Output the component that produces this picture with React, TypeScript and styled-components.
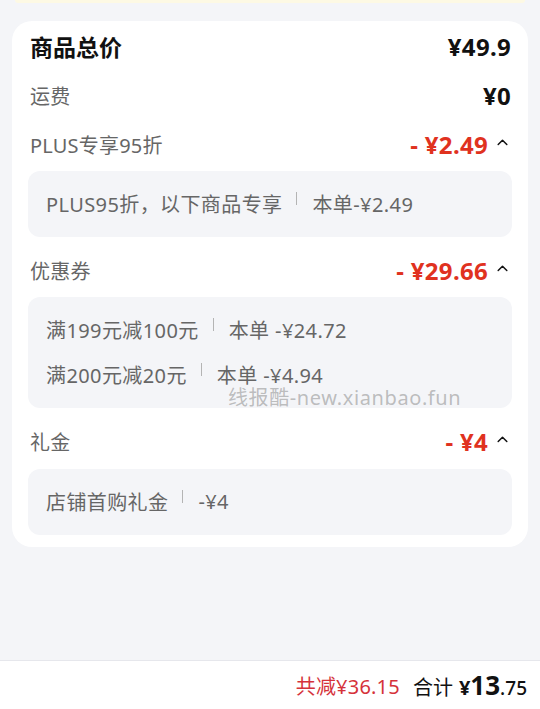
import React from "react";
import styled, { createGlobalStyle } from "styled-components";

const Global = createGlobalStyle`
  html, body { margin: 0; padding: 0; background: #f4f5f8; }
  body { font-family: "Noto Sans", "Noto Sans CJK SC", sans-serif; -webkit-font-smoothing: antialiased; }
  * { box-sizing: border-box; }
`;

const Page = styled.div`
  width: 540px;
  height: 709px;
  display: flex;
  flex-direction: column;
  background: #f4f5f8;
  position: relative;
  overflow: hidden;
`;

const TopStrip = styled.div`
  height: 3px;
  margin: 0 15px;
  background: #fdf9e4;
  border-radius: 0 0 10px 10px;
`;

const Card = styled.div`
  margin: 18px 12px 0 12px;
  background: #fff;
  border-radius: 20px;
  padding: 0 16px 12px 16px;
  display: flex;
  flex-direction: column;
  position: relative;
`;

const Row = styled.div<{ $h: number; $mt?: number }>`
  height: ${(p) => p.$h}px;
  margin-top: ${(p) => p.$mt ?? 0}px;
  padding: 0 1px 0 2px;
  display: flex;
  align-items: center;
  justify-content: space-between;
`;

const Label = styled.span<{ $strong?: boolean }>`
  font-size: ${(p) => (p.$strong ? 23 : 20)}px;
  font-weight: ${(p) => (p.$strong ? 700 : 400)};
  color: ${(p) => (p.$strong ? "#111" : "#666")};
  letter-spacing: ${(p) => (p.$strong ? 0 : 0.2)}px;
`;

const Amount = styled.span`
  font-size: 24px;
  font-weight: 700;
  color: #111;
  letter-spacing: 0.3px;
`;

const RedAmount = styled.span`
  display: flex;
  align-items: center;
  gap: 9px;
  margin-right: 3px;
  font-size: 24px;
  font-weight: 700;
  color: #e0321f;
  letter-spacing: 0.3px;
`;

const Caret = styled.svg`
  width: 11px;
  height: 8px;
  margin-top: -5px;
`;

const DetailBox = styled.div<{ $mt: number }>`
  margin-top: ${(p) => p.$mt}px;
  background: #f4f5f8;
  border-radius: 12px;
  padding: 10px 18px 11px 18px;
  display: flex;
  flex-direction: column;
`;

const DetailLine = styled.div`
  height: 45px;
  display: flex;
  align-items: center;
  font-size: 20px;
  letter-spacing: 0.4px;
  color: #666;
  white-space: pre;
`;

const Sep = styled.span`
  display: inline-block;
  width: 1px;
  height: 13px;
  background: #b4b4b4;
  margin: -10px 15px 0 14px;
`;

const Watermark = styled.div`
  position: absolute;
  left: 216px;
  top: 361px;
  font-size: 20px;
  color: rgba(140, 140, 140, 0.55);
  letter-spacing: 0.6px;
`;

const Spacer = styled.div`
  flex: 1;
`;

const BottomBar = styled.div`
  height: 49px;
  background: #fff;
  border-top: 1px solid #e6e7ec;
  display: flex;
  align-items: center;
  justify-content: flex-end;
  padding-right: 13px;
  gap: 13px;
`;

const Saved = styled.span`
  font-size: 20px;
  letter-spacing: 0.2px;
  color: #d5323a;
`;

const Total = styled.span`
  display: flex;
  align-items: baseline;
  font-size: 20px;
  color: #111;
`;

const TotalYen = styled.span`
  font-weight: 700;
  margin-left: 6px;
  font-size: 20px;
`;

const TotalInt = styled.span`
  font-weight: 700;
  font-size: 26px;
`;

const TotalDec = styled.span`
  font-weight: 500;
  font-size: 19px;
`;

const Chevron = () => (
  <Caret viewBox="0 0 11 8">
    <path d="M1.2 6.5 L5.5 2.2 L9.8 6.5" fill="none" stroke="#111" strokeWidth="1.5" strokeLinecap="round" strokeLinejoin="round" />
  </Caret>
);

export default function App() {
  return (
    <Page>
      <Global />
      <TopStrip />
      <Card>
        <Row $h={50}>
          <Label $strong>商品总价</Label>
          <Amount>¥49.9</Amount>
        </Row>
        <Row $h={48}>
          <Label>运费</Label>
          <Amount>¥0</Amount>
        </Row>
        <Row $h={50}>
          <Label>PLUS专享95折</Label>
          <RedAmount>
            - ¥2.49
            <Chevron />
          </RedAmount>
        </Row>
        <DetailBox $mt={2}>
          <DetailLine>
            PLUS95折，以下商品专享<Sep />本单-¥2.49
          </DetailLine>
        </DetailBox>
        <Row $h={48} $mt={9}>
          <Label>优惠券</Label>
          <RedAmount>
            - ¥29.66
            <Chevron />
          </RedAmount>
        </Row>
        <DetailBox $mt={3}>
          <DetailLine>
            满199元减100元<Sep />本单 -¥24.72
          </DetailLine>
          <DetailLine>
            满200元减20元<Sep />本单 -¥4.94
          </DetailLine>
        </DetailBox>
        <Row $h={48} $mt={9}>
          <Label>礼金</Label>
          <RedAmount>
            - ¥4
            <Chevron />
          </RedAmount>
        </Row>
        <DetailBox $mt={4}>
          <DetailLine>
            店铺首购礼金<Sep />-¥4
          </DetailLine>
        </DetailBox>
        <Watermark>线报酷-new.xianbao.fun</Watermark>
      </Card>
      <Spacer />
      <BottomBar>
        <Saved>共减¥36.15</Saved>
        <Total>
          合计<TotalYen>¥</TotalYen>
          <TotalInt>13</TotalInt>
          <TotalDec>.75</TotalDec>
        </Total>
      </BottomBar>
    </Page>
  );
}
